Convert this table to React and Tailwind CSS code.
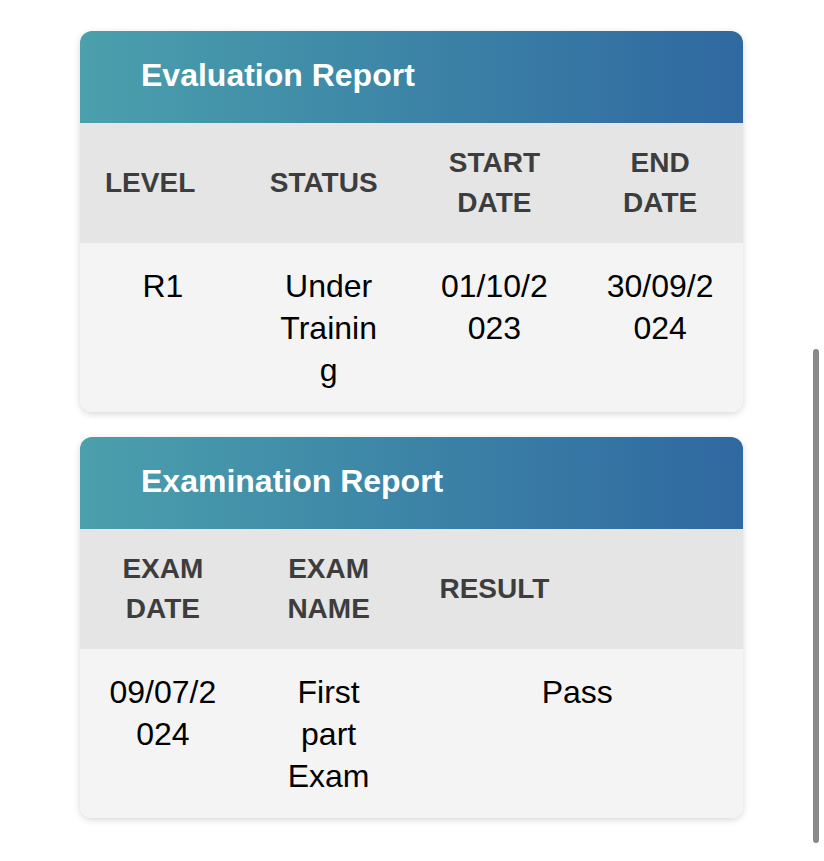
export default function App() {
  const font = { fontFamily: '"Liberation Sans", Arial, Helvetica, sans-serif' };
  const thBase = "px-[24px] py-[20px] text-[28px] leading-[40px] font-bold text-[#3d3d3d]";
  const tdBase = "px-[28px] pt-[22px] pb-[21px] text-[32px] leading-[42px] text-black text-center [overflow-wrap:anywhere]";
  return (
    <div className="relative min-h-[861px] bg-white pt-[31px]" style={font}>
      <div className="ml-[80px] w-[663px] flex flex-col gap-[25px]">
        <div className="rounded-[12px] overflow-hidden shadow-[0_2px_7px_rgba(0,0,0,0.16)]">
          <div className="h-[92px] flex items-center pl-[61px] pb-[4px] bg-linear-to-r from-[#4ba0ac] to-[#3068a0]">
            <h2 className="text-[32px] font-bold text-white leading-none">Evaluation Report</h2>
          </div>
          <div className="grid grid-cols-4 bg-[#e5e5e5] items-center">
            <div className={`${thBase} text-left pl-[25px]`}>LEVEL</div>
            <div className={`${thBase} text-left`}>STATUS</div>
            <div className={`${thBase} text-center`}>START DATE</div>
            <div className={`${thBase} text-center`}>END DATE</div>
          </div>
          <div className="grid grid-cols-4 bg-[#f4f4f4] items-start">
            <div className={tdBase}>R1</div>
            <div className={tdBase}>Under Training</div>
            <div className={tdBase}>01/10/2023</div>
            <div className={tdBase}>30/09/2024</div>
          </div>
        </div>

        <div className="rounded-[12px] overflow-hidden shadow-[0_2px_7px_rgba(0,0,0,0.16)]">
          <div className="h-[92px] flex items-center pl-[61px] pb-[4px] bg-linear-to-r from-[#4ba0ac] to-[#3068a0]">
            <h2 className="text-[32px] font-bold text-white leading-none">Examination Report</h2>
          </div>
          <div className="grid grid-cols-4 bg-[#e5e5e5] items-center">
            <div className={`${thBase} text-center`}>EXAM DATE</div>
            <div className={`${thBase} text-center`}>EXAM NAME</div>
            <div className={`${thBase} text-center`}>RESULT</div>
            <div className={thBase}></div>
          </div>
          <div className="grid grid-cols-4 bg-[#f4f4f4] items-start">
            <div className={tdBase}>09/07/2024</div>
            <div className={tdBase}>First part Exam</div>
            <div className={`${tdBase} col-span-2`}>Pass</div>
          </div>
        </div>
      </div>
      <div className="absolute left-[813px] top-[349px] w-[6px] h-[494px] rounded-full bg-[#898989]"></div>
    </div>
  );
}
